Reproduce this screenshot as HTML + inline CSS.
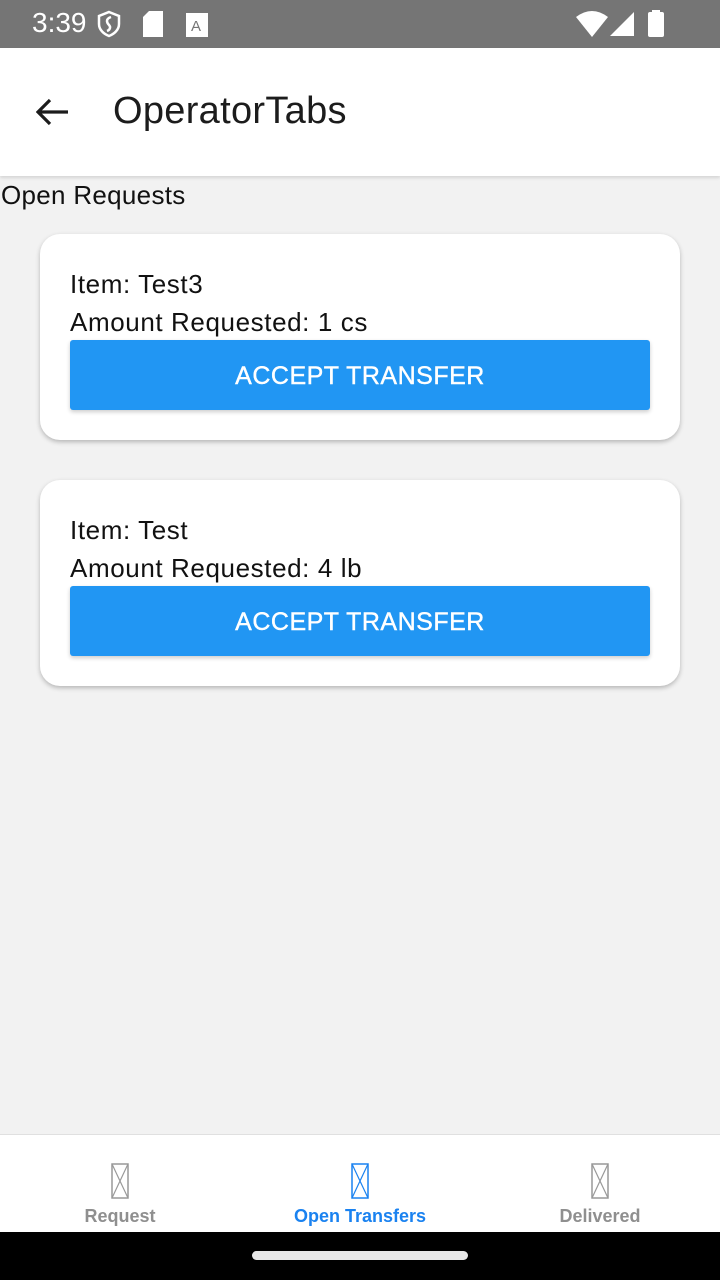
<!DOCTYPE html>
<html><head><meta charset="utf-8"><style>
*{margin:0;padding:0;box-sizing:border-box}
body{width:720px;height:1280px;background:#f2f2f2;font-family:"Liberation Sans",sans-serif;position:relative;overflow:hidden}
.status{position:absolute;top:0;left:0;width:720px;height:48px;background:#757575;color:#fff}
.app{position:absolute;top:48px;left:0;width:720px;height:128px;background:#fff;box-shadow:0 2px 3px rgba(0,0,0,.12)}
.title{position:absolute;left:113px;top:42px;font-size:38px;color:#1c1c1c;letter-spacing:0.3px}
.sec{position:absolute;left:1px;top:180px;font-size:26px;color:#111;letter-spacing:0.3px}
.card{position:absolute;left:40px;width:640px;height:206px;background:#fff;border-radius:20px;box-shadow:0 2px 5px rgba(0,0,0,.25)}
.card .t{position:absolute;left:30px;font-size:26px;color:#111;letter-spacing:0.6px}
.btn{position:absolute;left:30px;top:106px;width:580px;height:70px;background:#2196f3;border-radius:3px;color:#fff;font-size:25px;text-align:center;line-height:72px;box-shadow:0 2px 4px rgba(0,0,0,.2);letter-spacing:0.5px;-webkit-text-stroke:0.4px #fff}
.nav{position:absolute;top:1134px;left:0;width:720px;height:98px;background:#fff;border-top:1px solid #e0e0e0}
.tab{position:absolute;top:0;width:240px;text-align:center;font-size:18px;font-weight:bold;color:#8f8f8f}
.tab svg{position:absolute;top:28px;left:111px}
.tab span{position:absolute;top:71px;left:0;width:240px}
.bot{position:absolute;top:1232px;left:0;width:720px;height:48px;background:#000}
</style></head><body>
<div class="status">
<div style="position:absolute;left:32px;top:7px;font-size:28px">3:39</div>
<svg style="position:absolute;left:96px;top:10px" width="26" height="28" viewBox="0 0 26 28"><path d="M13 2 L23 6 V14 C23 20 18 24 13 26 C8 24 3 20 3 14 V6 Z" fill="none" stroke="#fff" stroke-width="2.5"/><path d="M15 7 C9 9 11 13 13 15 C15 17 14 20 11 21" fill="none" stroke="#fff" stroke-width="2.5"/></svg>
<svg style="position:absolute;left:143px;top:11px" width="22" height="26"><path d="M6 0 H20 V26 H0 V6 Z" fill="#fff"/></svg>
<svg style="position:absolute;left:186px;top:13px" width="22" height="24"><rect width="22" height="24" fill="#fff"/><text x="5" y="18" font-size="15" font-family="Liberation Sans" fill="#757575">A</text></svg>
<svg style="position:absolute;left:576px;top:11px" width="32" height="26"><path d="M0 6 Q16 -6 32 6 L16 26 Z" fill="#fff"/></svg>
<svg style="position:absolute;left:610px;top:12px" width="24" height="24"><path d="M24 0 V24 H0 Z" fill="#fff"/></svg>
<svg style="position:absolute;left:648px;top:10px" width="16" height="27"><rect x="4" y="0" width="8" height="3" fill="#fff"/><rect x="0" y="2" width="16" height="25" rx="2" fill="#fff"/></svg>
</div>
<div class="app">
<svg style="position:absolute;left:36px;top:50px" width="32" height="28" viewBox="0 0 32 28"><path d="M32 14 H4 M14 2 L2 14 L14 26" fill="none" stroke="#1c1c1c" stroke-width="3.2"/></svg>
<div class="title">OperatorTabs</div>
</div>
<div class="sec">Open Requests</div>
<div class="card" style="top:234px"><div class="t" style="top:35px">Item: Test3</div><div class="t" style="top:73px">Amount Requested: 1 cs</div><div class="btn">ACCEPT TRANSFER</div></div>
<div class="card" style="top:480px"><div class="t" style="top:35px">Item: Test</div><div class="t" style="top:73px">Amount Requested: 4 lb</div><div class="btn">ACCEPT TRANSFER</div></div>
<div class="nav">
<div class="tab" style="left:0"><svg width="18" height="36"><rect x="1" y="1" width="16" height="34" fill="none" stroke="#999" stroke-width="1.5"/><path d="M1 1 L17 35 M17 1 L1 35" stroke="#999" stroke-width="1.2"/></svg><span>Request</span></div>
<div class="tab" style="left:240px;color:#1a82f0"><svg width="18" height="36"><rect x="1" y="1" width="16" height="34" fill="none" stroke="#1a82f0" stroke-width="1.5"/><path d="M1 1 L17 35 M17 1 L1 35" stroke="#1a82f0" stroke-width="1.2"/></svg><span>Open Transfers</span></div>
<div class="tab" style="left:480px"><svg width="18" height="36"><rect x="1" y="1" width="16" height="34" fill="none" stroke="#999" stroke-width="1.5"/><path d="M1 1 L17 35 M17 1 L1 35" stroke="#999" stroke-width="1.2"/></svg><span>Delivered</span></div>
</div>
<div class="bot"><div style="position:absolute;left:252px;top:19px;width:216px;height:9px;border-radius:5px;background:#e8e8e8"></div></div>
</body></html>
